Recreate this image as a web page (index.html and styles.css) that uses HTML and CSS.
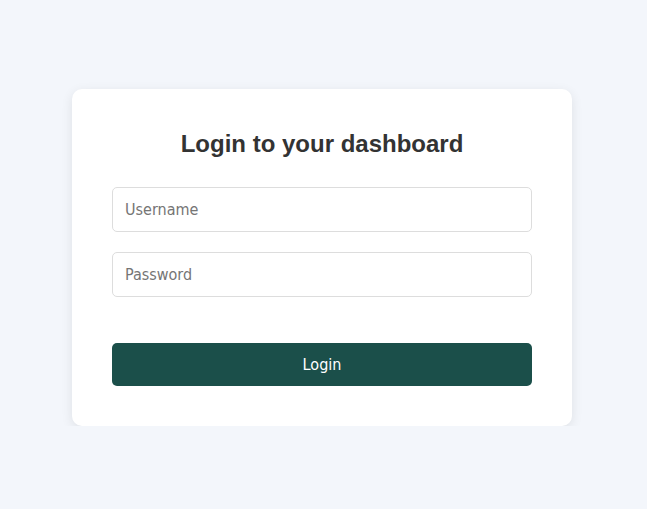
FILE: index.html
```html
<!DOCTYPE html>
<html>
<head>
<meta charset="utf-8">
<link rel="stylesheet" href="styles.css">
</head>
<body>
<main class="page">
  <form class="card">
    <h2 class="title">Login to your dashboard</h2>
    <input class="field" type="text" placeholder="Username">
    <input class="field" type="password" placeholder="Password">
    <button class="btn" type="button">Login</button>
  </form>
</main>
</body>
</html>
```
FILE: styles.css
```css
* { box-sizing: border-box; }
html, body { margin: 0; padding: 0; }
body {
  background: #f3f6fb;
  font-family: "DejaVu Sans Condensed", "DejaVu Sans", sans-serif;
}
.page {
  display: flex;
  justify-content: center;
  padding: 89px 0 0 0;
  margin-left: -3px;
}
.card {
  width: 500px;
  background: #fff;
  border-radius: 10px;
  box-shadow: 0 3px 12px rgba(0, 0, 0, 0.09);
  padding: 41px 40px 40px;
  display: flex;
  flex-direction: column;
}
.title {
  margin: 0 0 29px;
  font-family: "Liberation Sans", Arial, sans-serif;
  font-weight: bold;
  font-size: 24px;
  line-height: 28px;
  color: #333;
  text-align: center;
}
.field {
  height: 45px;
  border: 1px solid #ddd;
  border-radius: 5px;
  padding: 0 12px;
  font-family: "DejaVu Sans Condensed", "DejaVu Sans", sans-serif;
  font-stretch: condensed;
  font-size: 16px;
  color: #333;
  margin-bottom: 20px;
  outline: none;
}
.field::placeholder { color: #757575; }
.field + .field { margin-bottom: 46px; }
.btn {
  height: 43px;
  border: none;
  border-radius: 5px;
  background: #1b4f4a;
  color: #fff;
  font-family: "DejaVu Sans Condensed", "DejaVu Sans", sans-serif;
  font-stretch: condensed;
  font-size: 16px;
}
```
